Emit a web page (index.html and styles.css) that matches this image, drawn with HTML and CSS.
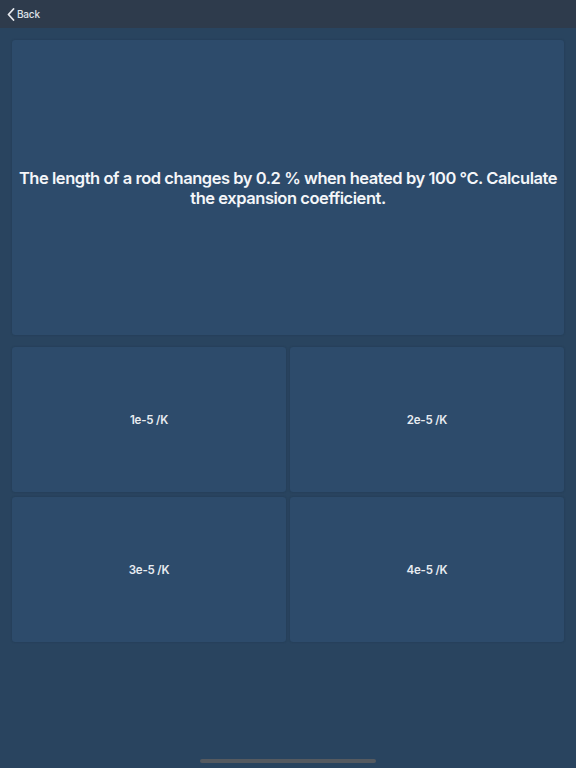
FILE: index.html
```html
<!DOCTYPE html>
<html lang="en">
<head>
<meta charset="utf-8">
<title>Quiz</title>
<link rel="stylesheet" href="styles.css">
</head>
<body>
<div class="app">
  <header class="nav">
    <a class="back" href="#">
      <svg class="chevron" width="8" height="13" viewBox="0 0 8 13" aria-hidden="true">
        <path d="M6.5 1 L1.5 6.5 L6.5 12" fill="none" stroke="#e6e9ee" stroke-width="1.8" stroke-linecap="round" stroke-linejoin="round"/>
      </svg>
      <span>Back</span>
    </a>
  </header>
  <main class="content">
    <section class="question">
      <p>The length of a rod changes by 0.2 % when heated by 100 °C. Calculate the expansion coefficient.</p>
    </section>
    <section class="answers">
      <button class="answer">1e-5 /K</button>
      <button class="answer">2e-5 /K</button>
      <button class="answer">3e-5 /K</button>
      <button class="answer">4e-5 /K</button>
    </section>
  </main>
  <div class="home-indicator"></div>
</div>
</body>
</html>
```
FILE: styles.css
```css
* { box-sizing: border-box; }

html, body {
  margin: 0;
  height: 100%;
}

body {
  background: #29445f;
  font-family: Inter, "Noto Sans", "Liberation Sans", sans-serif;
  color: #ffffff;
}

.app {
  width: 576px;
  height: 768px;
  display: flex;
  flex-direction: column;
  position: relative;
}

.nav {
  height: 28px;
  background: #2e3b4c;
  display: flex;
  align-items: center;
  padding-left: 7px;
  flex-shrink: 0;
}

.back {
  display: flex;
  align-items: center;
  gap: 2px;
  color: #dfe3e9;
  text-decoration: none;
  font-size: 10px;
  font-weight: 500;
  letter-spacing: -0.2px;
}

.chevron { display: block; }

.content {
  padding: 12px 12px 0;
  display: flex;
  flex-direction: column;
  gap: 12px;
}

.question {
  height: 295px;
  background: #2d4b6b;
  border-radius: 3px;
  display: flex;
  align-items: center;
  justify-content: center;
  padding: 0;
  box-shadow: 0 0 2px rgba(20, 35, 55, 0.35);
}

.question p {
  margin: 0;
  text-align: center;
  font-size: 16.5px;
  font-weight: 600;
  line-height: 20px;
  letter-spacing: -0.45px;
  color: #f4f6f9;
}

.answers {
  display: grid;
  grid-template-columns: 1fr 1fr;
  grid-template-rows: 145px 145px;
  column-gap: 4px;
  row-gap: 5px;
}

.answer {
  border: 0;
  margin: 0;
  background: #2d4b6b;
  border-radius: 3px;
  color: #e8ecf1;
  font-family: inherit;
  font-size: 11.5px;
  font-weight: 600;
  letter-spacing: -0.2px;
  box-shadow: 0 0 2px rgba(20, 35, 55, 0.35);
  cursor: pointer;
}

.home-indicator {
  position: absolute;
  left: 200px;
  bottom: 5px;
  width: 176px;
  height: 4px;
  border-radius: 2px;
  background: #555a60;
}
```
